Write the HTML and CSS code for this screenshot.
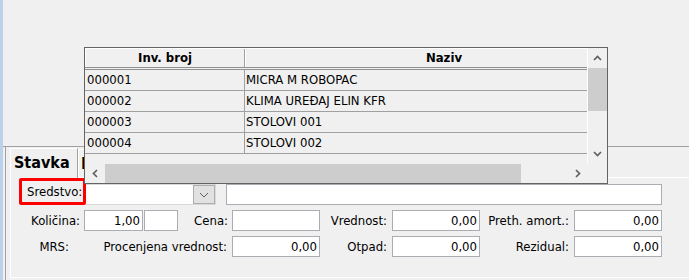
FILE: index.html
```html
<!DOCTYPE html>
<html lang="sr">
<head>
    <meta charset="UTF-8">
    <title>Stavka</title>
    <link rel="stylesheet" href="styles.css">
</head>
<body>
    <div class="window">
        <div class="strip"></div>
        <div class="main">
            <div class="top-area"></div>
            <div class="lower">
                <div class="tab-head">
                    <div class="tab active">Stavka</div>
                    <div class="tab">Podaci</div>
                </div>
                <div class="tab-body">
                    <div class="row row-1">
                        <label class="lbl-marked">Sredstvo:</label>
                        <div class="combo">
                            <input type="text" class="combo-text" value="">
                            <span class="combo-btn">
                                <svg width="10" height="6" viewBox="0 0 10 6"><path d="M1 1 L5 5 L9 1" stroke="#606060" stroke-width="1" fill="none"/></svg>
                            </span>
                        </div>
                        <input type="text" class="field field-naziv" value="">
                    </div>
                    <div class="row">
                        <label class="lbl w73">Količina:</label>
                        <input type="text" class="field w59" value="1,00">
                        <input type="text" class="field w34" value="">
                        <label class="lbl w54">Cena:</label>
                        <input type="text" class="field w88" value="">
                        <label class="lbl w72">Vrednost:</label>
                        <input type="text" class="field w88" value="0,00">
                        <label class="lbl w94">Preth. amort.:</label>
                        <input type="text" class="field w88" value="0,00">
                    </div>
                    <div class="row">
                        <label class="lbl w73 lbl-mrs">MRS:</label>
                        <label class="lbl w148">Procenjena vrednost:</label>
                        <input type="text" class="field w88" value="0,00">
                        <label class="lbl w72">Otpad:</label>
                        <input type="text" class="field w88" value="0,00">
                        <label class="lbl w94">Rezidual:</label>
                        <input type="text" class="field w88" value="0,00">
                    </div>
                </div>
            </div>
        </div>

        <!-- lookup list dropped down over the form -->
        <div class="lookup">
            <div class="lookup-top">
                <div class="grid">
                    <div class="grid-row grid-head">
                        <div class="cell c-inv">Inv. broj</div>
                        <div class="cell c-naz">Naziv</div>
                    </div>
                    <div class="grid-row">
                        <div class="cell c-inv">000001</div>
                        <div class="cell c-naz">MICRA M ROBOPAC</div>
                    </div>
                    <div class="grid-row">
                        <div class="cell c-inv">000002</div>
                        <div class="cell c-naz">KLIMA UREĐAJ ELIN KFR</div>
                    </div>
                    <div class="grid-row">
                        <div class="cell c-inv">000003</div>
                        <div class="cell c-naz">STOLOVI 001</div>
                    </div>
                    <div class="grid-row">
                        <div class="cell c-inv">000004</div>
                        <div class="cell c-naz">STOLOVI 002</div>
                    </div>
                </div>
                <div class="vscroll">
                    <div class="sb-btn v-btn">
                        <svg width="9" height="6" viewBox="0 0 9 6"><path d="M1 5 L4.5 1.5 L8 5" stroke="#606060" stroke-width="1.7" fill="none"/></svg>
                    </div>
                    <div class="vthumb"></div>
                    <div class="track"></div>
                    <div class="sb-btn v-btn">
                        <svg width="9" height="6" viewBox="0 0 9 6"><path d="M1 1 L4.5 4.5 L8 1" stroke="#606060" stroke-width="1.7" fill="none"/></svg>
                    </div>
                </div>
            </div>
            <div class="lookup-bottom">
                <div class="hscroll">
                    <div class="sb-btn h-btn">
                        <svg width="6" height="9" viewBox="0 0 6 9"><path d="M5 1 L1.5 4.5 L5 8" stroke="#606060" stroke-width="1.7" fill="none"/></svg>
                    </div>
                    <div class="hthumb"></div>
                    <div class="track"></div>
                    <div class="sb-btn h-btn">
                        <svg width="6" height="9" viewBox="0 0 6 9"><path d="M1 1 L4.5 4.5 L1 8" stroke="#606060" stroke-width="1.7" fill="none"/></svg>
                    </div>
                </div>
                <div class="corner"></div>
            </div>
        </div>
    </div>
</body>
</html>
```

FILE: styles.css
```css
body {
    margin: 0;
    padding: 0;
    background: #f0f0f0;
    font-family: "DejaVu Sans Condensed", "Liberation Sans", sans-serif;
    font-size: 13px;
    color: #000;
}
.window {
    position: relative;
    display: flex;
    width: 689px;
    height: 280px;
    overflow: hidden;
}
.strip {
    width: 3px;
    background: #b9d1ea;
}
.main {
    flex: 1;
    display: flex;
    flex-direction: column;
}
.top-area {
    height: 146px;
    border-bottom: 1px solid #a0a0a0;
}
.lower {
    flex: 1;
    margin-left: 2px;
    padding-left: 4px;
    border-left: 1px solid #a0a0a0;
}

/* tabs */
.tab-head {
    display: flex;
    height: 30px;
}
.tab {
    box-sizing: border-box;
    height: 28px;
    margin-top: 2px;
    padding: 0 8px 0 2px;
    border-top: 1px solid #fff;
    border-left: 1px solid #fff;
    border-right: 1px solid #a0a0a0;
    font-weight: bold;
    font-size: 16px;
    line-height: 27px;
}
.tab.active {
    position: relative;
    z-index: 1;
    width: 68px;
    height: 30px;
    margin-top: 1px;
    margin-bottom: -1px;
    padding-left: 3px;
    background: #f0f0f0;
    line-height: 28px;
}
.tab-body {
    box-sizing: border-box;
    height: 101px;
    border-top: 1px solid #fff;
    border-left: 1px solid #fff;
    border-bottom: 1px solid #fff;
}

/* form rows */
.row {
    display: flex;
    height: 21px;
    margin-top: 5px;
}
.row-1 {
    height: 27px;
    margin-top: 0;
    padding-left: 8px;
    margin-bottom: 2px;
}
.lbl {
    box-sizing: border-box;
    padding-right: 4px;
    text-align: right;
    line-height: 21px;
    white-space: nowrap;
}
.lbl-marked {
    box-sizing: border-box;
    width: 67px;
    height: 27px;
    padding-left: 5px;
    border: 3px solid #f00;
    border-radius: 2px;
    line-height: 21px;
}
.lbl-mrs {
    padding-right: 15px;
}
.w54 { width: 54px; }
.w72 { width: 72px; padding-right: 5px; }
.w73 { width: 73px; }
.w94 { width: 94px; padding-right: 5px; }
.w148 { width: 148px; padding-right: 5px; }

.field {
    box-sizing: border-box;
    height: 21px;
    margin: 0;
    padding: 0 2px;
    border: 1px solid #abadb3;
    background: #fff;
    font: inherit;
    text-align: right;
    outline: none;
}
.w59 { width: 59px; }
.w34 { width: 34px; margin-left: 1px; }
.w88 { width: 88px; }

.combo {
    box-sizing: border-box;
    display: flex;
    width: 130px;
    height: 21px;
    margin-top: 6px;
    border: 1px solid #d9d9d9;
    border-left: none;
    background: #fff;
}
.combo-text {
    flex: 1;
    min-width: 0;
    border: none;
    padding: 0;
    font: inherit;
    outline: none;
}
.combo-btn {
    box-sizing: border-box;
    display: flex;
    align-items: center;
    justify-content: center;
    width: 22px;
    border: 1px solid #adadad;
    background: #e1e1e1;
}
.field-naziv {
    width: 436px;
    margin-top: 6px;
    margin-left: 10px;
    text-align: left;
}

/* lookup list */
.lookup {
    position: absolute;
    left: 84px;
    top: 47px;
    z-index: 5;
    box-sizing: border-box;
    width: 524px;
    height: 137px;
    border: 1px solid #646464;
    background: #f0f0f0;
}
.lookup-top {
    display: flex;
    height: 116px;
}
.grid {
    width: 502px;
    border-right: 1px solid #fff;
    overflow: hidden;
}
.grid-row {
    display: flex;
    width: 557px;
    height: 21px;
    box-sizing: border-box;
    border-bottom: 1px solid #a0a0a0;
    line-height: 20px;
    white-space: nowrap;
}
.grid-head {
    height: 22px;
    border-top: 1px solid #fff;
    border-bottom: 3px double #909090;
    font-weight: bold;
    line-height: 18px;
    text-align: center;
}
.cell {
    box-sizing: border-box;
    overflow: hidden;
}
.c-inv {
    width: 160px;
    padding-left: 2px;
    border-right: 1px solid #a0a0a0;
}
.c-naz {
    width: 397px;
    padding-left: 1px;
}
.grid-head .cell {
    border-left: 1px solid #fff;
    padding-left: 0;
}

.vscroll {
    display: flex;
    flex-direction: column;
    width: 19px;
}
.sb-btn {
    display: flex;
    align-items: center;
    justify-content: center;
}
.v-btn {
    height: 20px;
}
.vthumb {
    height: 43px;
    background: #cdcdcd;
}
.track {
    flex: 1;
}
.lookup-bottom {
    display: flex;
    height: 19px;
}
.hscroll {
    display: flex;
    width: 503px;
}
.h-btn {
    width: 20px;
}
.hthumb {
    width: 416px;
    background: #cdcdcd;
}
.corner {
    width: 19px;
}
```
